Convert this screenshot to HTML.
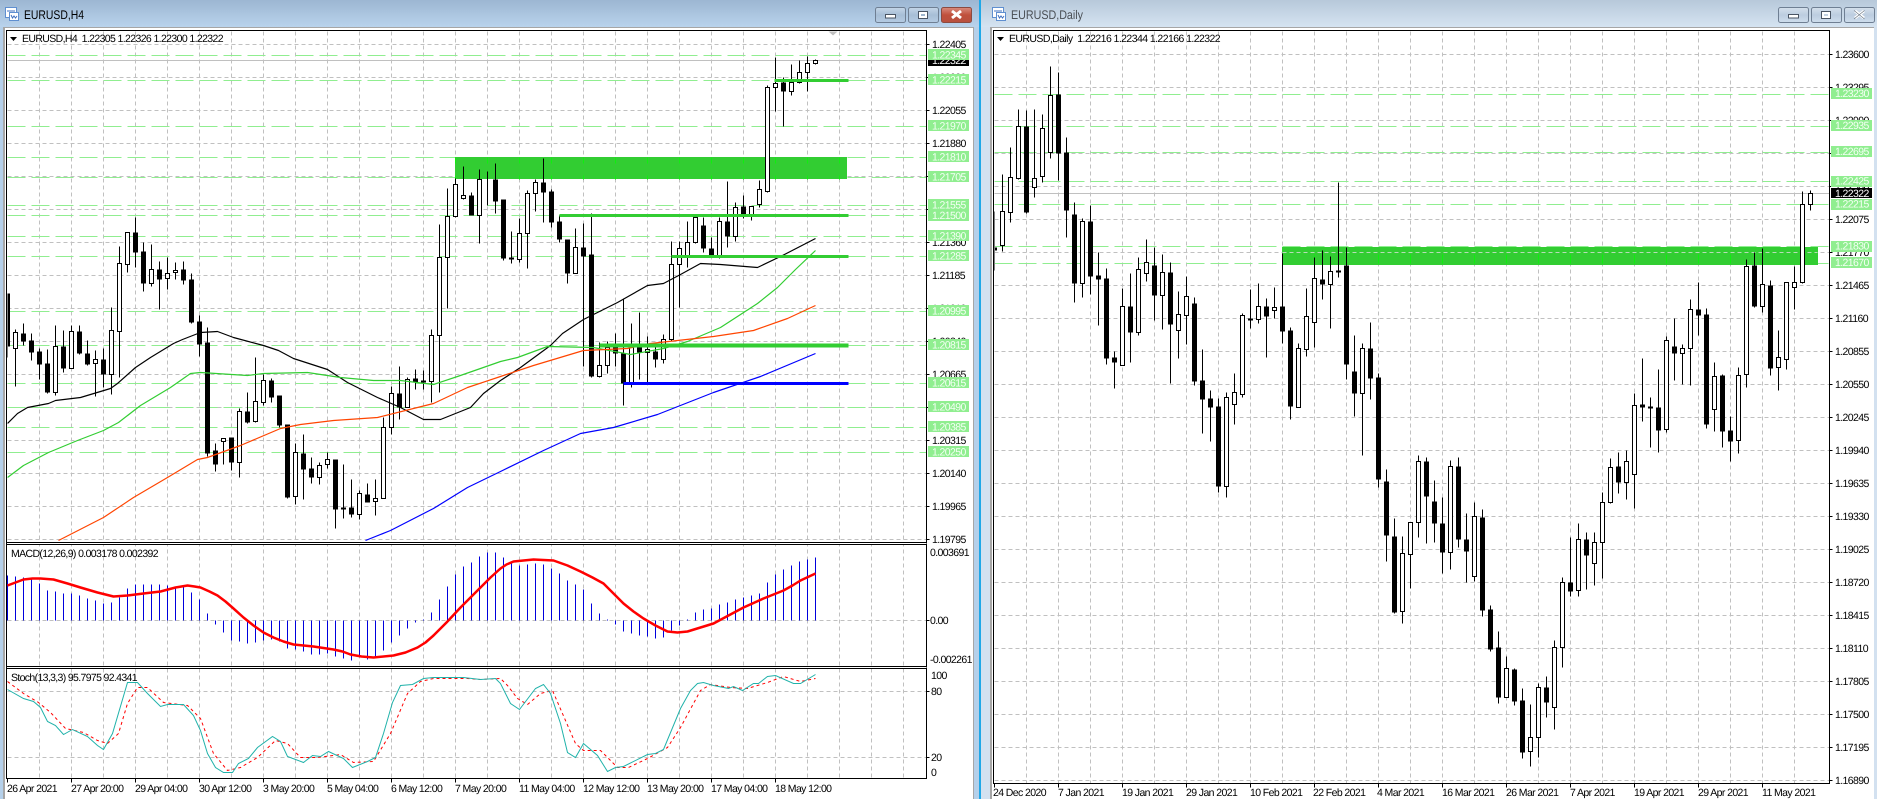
<!DOCTYPE html>
<html><head><meta charset="utf-8"><title>EURUSD</title>
<style>
html,body{margin:0;padding:0;background:#fff;width:1877px;height:799px;overflow:hidden}
svg{display:block}
text{font-family:"Liberation Sans",sans-serif;font-size:10.5px;letter-spacing:-.6px;fill:#000;text-rendering:geometricPrecision}
.l text{fill:#f4fff4}
.t{font-size:12.5px;letter-spacing:0}
</style></head><body>
<svg width="1877" height="799" viewBox="0 0 1877 799" xmlns="http://www.w3.org/2000/svg">
<defs>
<linearGradient id="a" x1="0" y1="0" x2="0" y2="1"><stop offset="0" stop-color="#9cb6d2"/><stop offset="1" stop-color="#b9d3ec"/></linearGradient>
<linearGradient id="b" x1="0" y1="0" x2="0" y2="1"><stop offset="0" stop-color="#b7c8da"/><stop offset="1" stop-color="#d5e3f1"/></linearGradient>
<linearGradient id="r" x1="0" y1="0" x2="0" y2="1"><stop offset="0" stop-color="#d98c7e"/><stop offset=".5" stop-color="#c0503c"/><stop offset="1" stop-color="#b8503e"/></linearGradient>
<linearGradient id="c" x1="0" y1="0" x2="0" y2="1"><stop offset="0" stop-color="#c5d6e8"/><stop offset=".5" stop-color="#a7bed6"/><stop offset="1" stop-color="#b5cce3"/></linearGradient>
<linearGradient id="d" x1="0" y1="0" x2="0" y2="1"><stop offset="0" stop-color="#d5e0ec"/><stop offset=".5" stop-color="#bccde0"/><stop offset="1" stop-color="#cfdeed"/></linearGradient>
<clipPath id="m"><rect x="7" y="31" width="919" height="511"/></clipPath>
<clipPath id="n"><rect x="994" y="31" width="835" height="752"/></clipPath>
</defs>

<!-- window frames -->
<rect width="1877" height="799" fill="#fff"/>
<rect x="0" y="0" width="981" height="799" fill="#b5d0ea"/>
<rect x="981" y="0" width="896" height="799" fill="#d3e1f0"/>
<rect x="0" y="0" width="981" height="27" fill="url(#a)"/>
<rect x="981" y="0" width="896" height="27" fill="url(#b)"/>
<rect x="979" y="0" width="2" height="799" fill="#1fa8e8"/>
<rect x="3" y="27" width="971" height="772" fill="#a6a6a6"/>
<rect x="990" y="27" width="884" height="772" fill="#a6a6a6"/>
<rect x="5" y="28" width="968" height="771" fill="#fff"/>
<rect x="992" y="28" width="882" height="771" fill="#fff"/>

<!-- title icons -->
<g fill="#fff" stroke="#5f8fd0">
<rect x="5.500" y="7.500" width="11" height="10"/><rect x="9.500" y="12.500" width="9" height="8"/>
<rect x="992.500" y="7.500" width="11" height="10"/><rect x="996.500" y="12.500" width="9" height="8"/>
</g>
<path d="M7 11h8M11 15l1.500 3 1.500-2 1.500 2 1.500-2M994 11h8M998 15l1.500 3 1.500-2 1.500 2 1.500-2" fill="none" stroke="#3f70c0"/>
<text class="t" x="24" y="19" textLength="60" lengthAdjust="spacingAndGlyphs">EURUSD,H4</text>
<text class="t" x="1011" y="19" textLength="72" lengthAdjust="spacingAndGlyphs" style="fill:#4a4f55">EURUSD,Daily</text>

<!-- window buttons -->
<g stroke="#6f7f93">
<rect x="875.500" y="7.500" width="30" height="15" rx="2" fill="url(#c)"/>
<rect x="908.500" y="7.500" width="30" height="15" rx="2" fill="url(#c)"/>
<rect x="941.500" y="7.500" width="30" height="15" rx="2" fill="url(#r)" stroke="#8b4a40"/>
<rect x="1778.500" y="7.500" width="30" height="15" rx="2" fill="url(#d)"/>
<rect x="1811.500" y="7.500" width="30" height="15" rx="2" fill="url(#d)"/>
<rect x="1844.500" y="7.500" width="30" height="15" rx="2" fill="url(#d)"/>
</g>
<g fill="#fff" stroke="#4a5564">
<rect x="885.500" y="14.500" width="10" height="3.500"/><rect x="1788.500" y="14.500" width="10" height="3.500"/>
<rect x="918.500" y="11.500" width="9" height="7"/><rect x="1821.500" y="11.500" width="9" height="7"/>
</g>
<rect x="921" y="14" width="4" height="2" fill="#9fb6ce"/><rect x="1824" y="14" width="4" height="2" fill="#c3d2e2"/>
<path d="M952 11l9 7M961 11l-9 7" stroke="#fff" stroke-width="3" fill="none"/>
<path d="M1855 11l9 7M1864 11l-9 7" stroke="#fff" stroke-width="3" fill="none"/>
<path d="M1854 10.500l10.500 8.500M1864.500 10.500l-10.500 8.500" stroke="#65717f" stroke-width=".6" fill="none"/>

<g transform="translate(.5,.5)">
<!-- LEFT GRID -->
<g fill="none" stroke="#c0c0c0" stroke-dasharray="4 3">
<path d="M39 31V778M71 31V778M103 31V778M135 31V778M167 31V778M199 31V778M231 31V778M263 31V778M295 31V778M327 31V778M359 31V778M391 31V778M423 31V778M455 31V778M487 31V778M519 31V778M551 31V778M583 31V778M615 31V778M647 31V778M679 31V778M711 31V778M743 31V778M775 31V778M807 31V778M839 31V778M871 31V778M903 31V778"/>
<path d="M7 44H926M7 77H926M7 110H926M7 143H926M7 176H926M7 209H926M7 242H926M7 275H926M7 308H926M7 341H926M7 374H926M7 407H926M7 440H926M7 473H926M7 506H926M7 539H926M7 620H926M7 691H926M7 757H926"/>
</g>
<path d="M7 60H926" stroke="#c0c0c0"/>
<path d="M7 55H926M7 80H926M7 126H926M7 157H926M7 177H926M7 205H926M7 215H926M7 236H926M7 256H926M7 311H926M7 345H926M7 383H926M7 407H926M7 427H926M7 452H926" stroke="#90ee90" stroke-dasharray="18 6" fill="none"/>
<rect x="454.500" y="156.500" width="392" height="22" fill="#32cd32"/>
<path d="M455 157V179M487 157V179M519 157V179M551 157V179M583 157V179M615 157V179M647 157V179M679 157V179M711 157V179M743 157V179M775 157V179M807 157V179M839 157V179" stroke="#10ee10" stroke-dasharray="6 12" fill="none"/>
<path d="M828 31h9l-4.500 4z" fill="#c0c0c0"/>

<!-- LEFT CANDLES -->
<g clip-path="url(#m)" fill="none" stroke="#000" shape-rendering="crispEdges">
<path d="M7 293V357M15 329V386M23 323V345M31 333V360M39 348V379M47 349V393M55 325V395M63 330V372M71 325V368M79 325V354M87 340V365M95 350V396M103 348V387M111 307V394M119 246V377M127 232V272M135 217V267M143 242V291M151 244V286M159 261V309M167 257V289M175 262V279M183 261V284M191 273V323M199 315V356M207 327V456M215 443V471M223 438V464M231 437V470M239 408V477M247 392V423M255 357V422M263 374V405M271 378V402M279 395V427M287 424V498M295 443V504M303 434V499M311 457V483M319 462V484M327 452V468M335 459V528M343 464V518M351 479V517M359 490V519M367 483V502M375 479V515M383 417V498M391 386V434M399 366V419M407 377V407M415 369V389M423 370V389M431 329V402M439 224V392M447 188V308M455 178V217M463 166V199M471 192V215M479 169V243M487 171V205M495 163V213M503 199V260M511 231V263M519 218V262M527 190V268M535 179V211M543 158V222M551 189V227M559 215V242M567 239V283M575 228V273M583 223V366M591 213V377M599 342V377M607 341V373M615 333V366M623 298V405M631 323V387M639 312V379M647 336V383M655 343V367M663 334V363M671 241V341M679 241V307M687 221V267M695 215V243M703 217V252M711 237V257M719 217V258M727 181V247M735 202V241M743 195V218M751 206V220M759 180V207M767 85V192M775 57V111M783 77V126M791 64V95M799 60V83M807 56V91M815 59V64"/>
<path fill="#fff" d="M13 332h4V348h-4zM53 346h4V392h-4zM69 331h4V368h-4zM93 359h4V363h-4zM109 330h4V374h-4zM117 263h4V331h-4zM125 232h4V264h-4zM149 269h4V283h-4zM165 273h4V278h-4zM173 270h4V272h-4zM221 438h4V441h-4zM237 411h4V462h-4zM253 401h4V421h-4zM261 380h4V402h-4zM293 452h4V496h-4zM317 465h4V477h-4zM325 459h4V464h-4zM357 493h4V514h-4zM373 498h4V501h-4zM381 427h4V498h-4zM389 393h4V427h-4zM405 379h4V407h-4zM429 335h4V381h-4zM437 257h4V335h-4zM445 216h4V257h-4zM453 184h4V216h-4zM461 195h4V198h-4zM477 179h4V215h-4zM517 233h4V259h-4zM525 193h4V233h-4zM533 182h4V193h-4zM573 247h4V273h-4zM597 365h4V376h-4zM605 347h4V365h-4zM629 347h4V383h-4zM645 349h4V352h-4zM661 339h4V359h-4zM669 264h4V339h-4zM677 248h4V264h-4zM685 242h4V257h-4zM693 217h4V242h-4zM717 221h4V255h-4zM733 207h4V236h-4zM749 206h4V215h-4zM757 189h4V204h-4zM765 87h4V191h-4zM773 83h4V87h-4zM789 82h4V91h-4zM797 72h4V82h-4zM805 63h4V72h-4zM813 60h4V63h-4z"/>
<path stroke-width="5" d="M7 293V346M23 333V341M31 340V352M39 351V364M47 363V392M63 346V368M79 331V353M87 353V364M103 359V374M135 232V252M143 251V283M159 269V279M183 269V280M191 279V322M199 321V344M207 342V453M215 450V464M231 437V462M247 411V422M271 380V397M279 395V425M287 424V497M303 453V469M311 468V477M335 459V509M343 507V509M351 507V514M367 494V502M399 393V407M415 378V382M423 380V382M471 195V215M495 179V201M503 199V258M511 257V259M543 182V192M551 191V222M559 221V239M567 239V273M583 247V256M591 254V376M615 347V353M623 353V383M639 347V352M655 351V359M703 225V248M711 248V255M727 221V236M743 206V214M783 82V91"/>
</g>

<!-- MAs -->
<g clip-path="url(#m)" fill="none" stroke-linejoin="round" stroke-width="1.200">
<polyline stroke="#000" points="7,423 17,413 27,407 48,403 55,400 80,397 110,388 117,383 135,367 150,357 173,343 182,339 200,332 217,331 233,337 263,345 278,350 293,358 327,369 347,382 377,397 400,407 423,419 440,419 470,407 483,393 500,380 520,367 550,345 562,333 583,319 617,302 647,285 663,283 680,274 700,263 720,264 757,267 782,255 815,238"/>
<polyline stroke="#32cd32" points="7,477 23,465 48,452 77,440 103,430 118,422 140,405 170,387 190,373 200,372 247,375 263,373 307,372 340,377 373,380 400,380 433,384 457,376 480,368 500,361 517,357 547,346 593,347 630,354 663,348 687,341 720,327 757,303 777,287 795,269 815,250"/>
<polyline stroke="#ff4500" points="58,540 103,517 133,497 167,477 197,459 207,457 240,445 280,428 300,424 333,420 377,417 433,403 467,387 500,376 533,365 583,350 627,348 650,343 713,336 753,330 787,318 815,305"/>
<polyline stroke="#0000ff" points="365,540 390,530 433,508 467,487 500,471 543,450 580,433 613,427 657,414 713,392 760,376 815,353"/>
</g>
<path d="M774 80H848M559 215H848M671 256H848" stroke="#32cd32" stroke-width="3" fill="none"/>
<path d="M599 345H848" stroke="#32cd32" stroke-width="4" fill="none"/>
<path d="M623 383H848" stroke="#0000ff" stroke-width="3" fill="none"/>

<!-- MACD -->
<path fill="none" stroke="#0000dd" d="M7 620V575M15 620V576M23 620V577M31 620V578M39 620V583M47 620V590M55 620V591M63 620V593M71 620V593M79 620V595M87 620V598M95 620V600M103 620V603M111 620V602M119 620V597M127 620V588M135 620V584M143 620V584M151 620V584M159 620V584M167 620V585M175 620V587M183 620V586M191 620V592M199 620V599M207 620V613M215 620V624M223 620V632M231 620V640M239 620V641M247 620V643M255 620V642M263 620V640M271 620V639M279 620V641M287 620V648M295 620V649M303 620V651M311 620V654M319 620V654M327 620V653M335 620V656M343 620V658M351 620V660M359 620V657M367 620V659M375 620V657M383 620V650M391 620V642M399 620V635M407 620V628M415 620V622M423 620V619M431 620V612M439 620V599M447 620V586M455 620V574M463 620V566M471 620V562M479 620V556M487 620V552M495 620V552M503 620V557M511 620V562M519 620V565M527 620V564M535 620V563M543 620V564M551 620V568M559 620V573M567 620V580M575 620V584M583 620V589M591 620V603M599 620V613M607 620V619M615 620V624M623 620V631M631 620V633M639 620V635M647 620V636M655 620V638M663 620V637M671 620V630M679 620V625M687 620V619M695 620V612M703 620V609M711 620V608M719 620V604M727 620V602M735 620V599M743 620V597M751 620V595M759 620V593M767 620V582M775 620V574M783 620V569M791 620V565M799 620V561M807 620V559M815 620V557"/>
<polyline fill="none" stroke="#ff0000" stroke-width="2.500" stroke-linejoin="round" points="7,585 15,582 23,579 32,578 40,578 53,579 67,583 80,587 97,592 105,594 113,596 127,595 143,593 160,591 175,587 187,585 194,586 200,587 209,591 217,595 225,601 233,608 243,617 253,625 263,632 273,637 283,641 293,644 313,646 333,649 342,651 350,654 361,656 373,657 393,655 405,652 417,647 425,642 433,635 446,622 460,607 470,597 480,587 490,577 500,568 506,564 513,561 523,560 533,559 553,560 567,565 580,571 592,577 603,583 613,593 623,603 633,611 643,618 655,625 667,631 677,632 687,631 700,627 713,623 728,615 743,607 763,598 783,590 792,585 800,580 815,573"/>

<!-- Stoch -->
<polyline fill="none" stroke="#ff0000" stroke-dasharray="3 3" points="7,681 23,693 38,702 50,712 65,728 83,732 97,740 107,743 118,733 127,703 137,687 147,687 163,702 187,705 200,718 213,753 227,770 240,767 257,757 275,740 287,743 300,757 317,757 340,754 353,762 373,761 390,733 407,693 420,681 433,678 467,678 480,679 500,678 507,685 517,698 527,704 540,693 552,690 565,720 575,743 583,750 600,750 617,767 628,767 647,758 667,747 680,727 700,690 710,684 730,687 747,688 767,682 783,676 800,681 815,678"/>
<polyline fill="none" stroke="#20b2aa" points="7,689 23,698 33,701 40,707 47,721 55,725 63,734 72,729 87,736 97,745 103,749 112,733 127,682 137,682 147,693 160,706 167,704 183,704 193,715 200,730 207,753 215,767 223,772 232,772 238,763 248,758 257,747 272,736 280,741 287,756 303,762 312,755 320,756 328,751 343,758 352,767 367,761 375,757 383,733 392,702 400,685 412,684 423,678 433,677 463,677 480,679 495,678 500,683 510,703 519,709 535,688 543,684 550,693 560,723 567,752 575,757 583,743 597,755 607,771 615,767 623,766 647,754 655,753 663,749 680,708 690,690 697,683 703,682 713,685 728,688 733,686 742,690 753,683 758,683 767,676 775,675 793,683 800,683 815,674"/>

<!-- left borders -->
<rect x="5" y="28" width="921" height="1" fill="#fff"/>
<path d="M6 30H926V778H6ZM6 542H926M6 544H926M6 666H926M6 668H926" fill="none" stroke="#000"/>
<path d="M7 543H926M7 667H926" stroke="#fff"/>
<path d="M926 44h3M926 77h3M926 110h3M926 143h3M926 176h3M926 209h3M926 242h3M926 275h3M926 308h3M926 341h3M926 374h3M926 407h3M926 440h3M926 473h3M926 506h3M926 539h3M926 620h3M926 691h3M926 757h3M7 778v4M71 778v4M135 778v4M199 778v4M263 778v4M327 778v4M391 778v4M455 778v4M519 778v4M583 778v4M647 778v4M711 778v4M775 778v4" stroke="#000" fill="none"/>

<!-- RIGHT GRID -->
<g fill="none" stroke="#c0c0c0" stroke-dasharray="4 3">
<path d="M1026 31V783M1058 31V783M1090 31V783M1122 31V783M1154 31V783M1186 31V783M1218 31V783M1250 31V783M1282 31V783M1314 31V783M1346 31V783M1378 31V783M1410 31V783M1442 31V783M1474 31V783M1506 31V783M1538 31V783M1570 31V783M1602 31V783M1634 31V783M1666 31V783M1698 31V783M1730 31V783M1762 31V783M1794 31V783"/>
<path d="M994 54H1829M994 87H1829M994 120H1829M994 153H1829M994 186H1829M994 219H1829M994 252H1829M994 285H1829M994 318H1829M994 351H1829M994 384H1829M994 417H1829M994 450H1829M994 483H1829M994 516H1829M994 549H1829M994 582H1829M994 615H1829M994 648H1829M994 681H1829M994 714H1829M994 747H1829M994 780H1829"/>
</g>
<path d="M994 193H1829" stroke="#c0c0c0"/>
<path d="M994 94H1829M994 126H1829M994 152H1829M994 181H1829M994 204H1829M994 246H1829M994 263H1829" stroke="#90ee90" stroke-dasharray="18 6" fill="none"/>
<rect x="1281.500" y="246.500" width="536" height="18" fill="#32cd32"/>
<path d="M1282 252H1817" stroke="#b8dcb8" stroke-dasharray="4 3" fill="none"/>
<path d="M1314 254V263M1346 254V263M1378 254V263M1410 254V263M1442 254V263M1474 254V263M1506 254V263M1538 254V263M1570 254V263M1602 254V263M1634 254V263M1666 254V263M1698 254V263M1730 254V263" stroke="#10ee10" fill="none"/>

<!-- RIGHT CANDLES -->
<g clip-path="url(#n)" fill="none" stroke="#000" shape-rendering="crispEdges">
<path d="M994 211V270M1002 174V251M1010 147V222M1018 109V179M1026 110V213M1034 109V197M1042 114V182M1050 66V158M1058 72V180M1066 137V237M1074 202V302M1082 218V297M1090 205V294M1098 252V325M1106 268V364M1114 351V388M1122 288V365M1130 273V362M1138 257V335M1146 239V281M1154 247V320M1162 254V329M1170 262V383M1178 291V358M1186 276V344M1194 297V385M1202 349V433M1210 390V441M1218 398V492M1226 392V497M1234 373V424M1242 313V397M1250 289V328M1258 283V323M1266 298V357M1274 287V318M1282 253V343M1290 327V419M1298 343V407M1306 288V356M1314 257V347M1322 250V299M1330 256V328M1338 182V277M1346 247V379M1354 335V416M1362 343V455M1370 322V399M1378 373V487M1386 469V561M1394 518V613M1402 536V623M1410 522V588M1418 455V537M1426 457V543M1434 480V542M1442 497V573M1450 460V569M1458 457V547M1466 513V582M1474 502V581M1482 509V616M1490 605V651M1498 631V703M1506 656V697M1514 668V705M1522 688V758M1530 704V766M1538 683V757M1546 676V717M1554 640V729M1562 577V667M1570 537V596M1578 523V596M1586 532V589M1594 532V585M1602 492V578M1610 458V503M1618 452V493M1626 450V499M1634 393V508M1642 358V421M1650 397V447M1658 369V452M1666 336V432M1674 318V380M1682 344V384M1690 299V385M1698 282V335M1706 308V428M1714 362V431M1722 374V447M1730 416V461M1738 367V453M1746 259V387M1754 252V307M1762 248V312M1770 280V375M1778 330V390M1786 282V369M1794 266V309M1802 191V283M1810 190V210"/>
<path fill="#fff" d="M1000 211h4V245h-4zM1008 177h4V212h-4zM1016 126h4V178h-4zM1032 178h4V187h-4zM1040 128h4V176h-4zM1048 95h4V152h-4zM1080 221h4V283h-4zM1120 306h4V365h-4zM1136 269h4V332h-4zM1144 262h4V273h-4zM1160 272h4V295h-4zM1176 314h4V330h-4zM1184 296h4V315h-4zM1224 397h4V486h-4zM1232 392h4V404h-4zM1240 315h4V394h-4zM1256 306h4V319h-4zM1272 307h4V310h-4zM1296 348h4V407h-4zM1304 316h4V349h-4zM1312 278h4V322h-4zM1328 271h4V284h-4zM1360 348h4V393h-4zM1400 553h4V611h-4zM1408 522h4V554h-4zM1416 461h4V522h-4zM1448 466h4V552h-4zM1472 516h4V576h-4zM1504 668h4V697h-4zM1528 737h4V751h-4zM1536 687h4V737h-4zM1552 647h4V707h-4zM1560 582h4V647h-4zM1576 539h4V590h-4zM1592 542h4V563h-4zM1600 502h4V542h-4zM1608 467h4V502h-4zM1624 461h4V482h-4zM1632 405h4V474h-4zM1664 340h4V429h-4zM1680 348h4V353h-4zM1688 309h4V348h-4zM1712 376h4V409h-4zM1736 375h4V440h-4zM1744 266h4V374h-4zM1760 284h4V306h-4zM1776 357h4V367h-4zM1784 282h4V359h-4zM1792 282h4V287h-4zM1800 204h4V282h-4zM1808 193h4V204h-4z"/>
<path stroke-width="5" d="M994 247V250M1026 126V212M1058 94V153M1066 152V210M1074 214V283M1090 221V276M1098 275V279M1106 278V358M1114 357V362M1130 306V332M1154 265V295M1170 272V324M1194 303V381M1202 380V399M1210 398V407M1218 406V486M1250 318V320M1266 306V316M1282 306V331M1290 330V406M1322 279V284M1338 270V272M1346 265V364M1354 371V393M1370 348V378M1378 377V479M1386 481V535M1394 536V612M1426 461V496M1434 501V523M1442 523V552M1458 466V539M1466 539V551M1482 517V610M1490 609V649M1498 647V697M1514 669V701M1522 700V752M1546 687V702M1570 582V591M1586 539V555M1618 466V482M1642 404V407M1650 406V408M1658 407V430M1674 346V353M1698 309V315M1706 314V424M1722 375V431M1730 430V441M1754 265V306M1770 285V368"/>
</g>

<path d="M993 30H1829V783H993Z" fill="none" stroke="#000"/>
<path d="M1829 54h3M1829 87h3M1829 120h3M1829 153h3M1829 186h3M1829 219h3M1829 252h3M1829 285h3M1829 318h3M1829 351h3M1829 384h3M1829 417h3M1829 450h3M1829 483h3M1829 516h3M1829 549h3M1829 582h3M1829 615h3M1829 648h3M1829 681h3M1829 714h3M1829 747h3M1829 780h3M994 783v4M1058 783v4M1122 783v4M1186 783v4M1250 783v4M1314 783v4M1378 783v4M1442 783v4M1506 783v4M1570 783v4M1634 783v4M1698 783v4M1762 783v4" stroke="#000" fill="none"/>
</g>

<!-- header texts -->
<path d="M10 37h7l-3.500 4z" fill="#000"/>
<text x="22" y="42" textLength="201">EURUSD,H4&#160;&#160;1.22305 1.22326 1.22300 1.22322</text>
<text x="11" y="557" textLength="147">MACD(12,26,9) 0.003178 0.002392</text>
<text x="11" y="681" textLength="126">Stoch(13,3,3) 95.7975 92.4341</text>
<path d="M997 37h7l-3.500 4z" fill="#000"/>
<text x="1009" y="42" textLength="211">EURUSD,Daily&#160;&#160;1.22216 1.22344 1.22166 1.22322</text>

<!-- left axis text -->
<g>
<text x="932" y="48">1.22405</text><text x="932" y="81">1.22230</text><text x="932" y="114">1.22055</text><text x="932" y="147">1.21880</text><text x="932" y="180">1.21705</text><text x="932" y="213">1.21535</text><text x="932" y="246">1.21360</text><text x="932" y="279">1.21185</text><text x="932" y="312">1.21010</text><text x="932" y="345">1.20840</text><text x="932" y="378">1.20665</text><text x="932" y="411">1.20490</text><text x="932" y="444">1.20315</text><text x="932" y="477">1.20140</text><text x="932" y="510">1.19965</text><text x="932" y="543">1.19795</text>
<text x="930" y="556">0.003691</text><text x="930" y="624">0.00</text><text x="930" y="663">-0.002261</text>
<text x="931" y="679">100</text><text x="931" y="695">80</text><text x="931" y="761">20</text><text x="931" y="776">0</text>
</g>
<rect x="928" y="55" width="41" height="11" fill="#000"/>
<text x="932" y="64" style="fill:#fff">1.22322</text>
<g fill="#90ee90">
<rect x="928" y="49" width="41" height="11"/><rect x="928" y="74" width="41" height="11"/><rect x="928" y="120" width="41" height="11"/><rect x="928" y="151" width="41" height="11"/><rect x="928" y="171" width="41" height="11"/><rect x="928" y="199" width="41" height="11"/><rect x="928" y="210" width="41" height="11"/><rect x="928" y="230" width="41" height="11"/><rect x="928" y="250" width="41" height="11"/><rect x="928" y="305" width="41" height="11"/><rect x="928" y="339" width="41" height="11"/><rect x="928" y="377" width="41" height="11"/><rect x="928" y="401" width="41" height="11"/><rect x="928" y="421" width="41" height="11"/><rect x="928" y="446" width="41" height="11"/>
</g>
<g class="l">
<text x="932" y="58.500">1.22345</text><text x="932" y="83.500">1.22215</text><text x="932" y="129.500">1.21970</text><text x="932" y="160.500">1.21810</text><text x="932" y="180.500">1.21705</text><text x="932" y="208.500">1.21555</text><text x="932" y="219">1.21500</text><text x="932" y="239.500">1.21390</text><text x="932" y="259.500">1.21285</text><text x="932" y="314.500">1.20995</text><text x="932" y="348.500">1.20815</text><text x="932" y="386.500">1.20615</text><text x="932" y="410.500">1.20490</text><text x="932" y="430.500">1.20385</text><text x="932" y="455.500">1.20250</text>
</g>

<!-- left time axis -->
<g>
<text x="7" y="792">26 Apr 2021</text><text x="71" y="792">27 Apr 20:00</text><text x="135" y="792">29 Apr 04:00</text><text x="199" y="792">30 Apr 12:00</text><text x="263" y="792">3 May 20:00</text><text x="327" y="792">5 May 04:00</text><text x="391" y="792">6 May 12:00</text><text x="455" y="792">7 May 20:00</text><text x="519" y="792">11 May 04:00</text><text x="583" y="792">12 May 12:00</text><text x="647" y="792">13 May 20:00</text><text x="711" y="792">17 May 04:00</text><text x="775" y="792">18 May 12:00</text>
</g>

<!-- right axis text -->
<g>
<text x="1835" y="58">1.23600</text><text x="1835" y="91">1.23295</text><text x="1835" y="124">1.22990</text><text x="1835" y="157">1.22685</text><text x="1835" y="190">1.22380</text><text x="1835" y="223">1.22075</text><text x="1835" y="256">1.21770</text><text x="1835" y="289">1.21465</text><text x="1835" y="322">1.21160</text><text x="1835" y="355">1.20855</text><text x="1835" y="388">1.20550</text><text x="1835" y="421">1.20245</text><text x="1835" y="454">1.19940</text><text x="1835" y="487">1.19635</text><text x="1835" y="520">1.19330</text><text x="1835" y="553">1.19025</text><text x="1835" y="586">1.18720</text><text x="1835" y="619">1.18415</text><text x="1835" y="652">1.18110</text><text x="1835" y="685">1.17805</text><text x="1835" y="718">1.17500</text><text x="1835" y="751">1.17195</text><text x="1835" y="784">1.16890</text>
</g>
<g fill="#90ee90">
<rect x="1831" y="88" width="41" height="11"/><rect x="1831" y="120" width="41" height="11"/><rect x="1831" y="146" width="41" height="11"/><rect x="1831" y="176" width="41" height="11"/><rect x="1831" y="199" width="41" height="11"/><rect x="1831" y="241" width="41" height="11"/><rect x="1831" y="257" width="41" height="11"/>
</g>
<rect x="1831" y="188" width="41" height="10" fill="#000"/>
<text x="1835" y="197" style="fill:#fff">1.22322</text>
<g class="l">
<text x="1835" y="97">1.23230</text><text x="1835" y="129">1.22935</text><text x="1835" y="155">1.22695</text><text x="1835" y="184.500">1.22425</text><text x="1835" y="207.500">1.22215</text><text x="1835" y="249.500">1.21830</text><text x="1835" y="266">1.21670</text>
</g>

<!-- right time axis -->
<g>
<text x="993" y="796">24 Dec 2020</text><text x="1058" y="796">7 Jan 2021</text><text x="1122" y="796">19 Jan 2021</text><text x="1186" y="796">29 Jan 2021</text><text x="1250" y="796">10 Feb 2021</text><text x="1313" y="796">22 Feb 2021</text><text x="1377" y="796">4 Mar 2021</text><text x="1442" y="796">16 Mar 2021</text><text x="1506" y="796">26 Mar 2021</text><text x="1570" y="796">7 Apr 2021</text><text x="1634" y="796">19 Apr 2021</text><text x="1698" y="796">29 Apr 2021</text><text x="1762" y="796">11 May 2021</text>
</g>
</svg>
</body></html>
